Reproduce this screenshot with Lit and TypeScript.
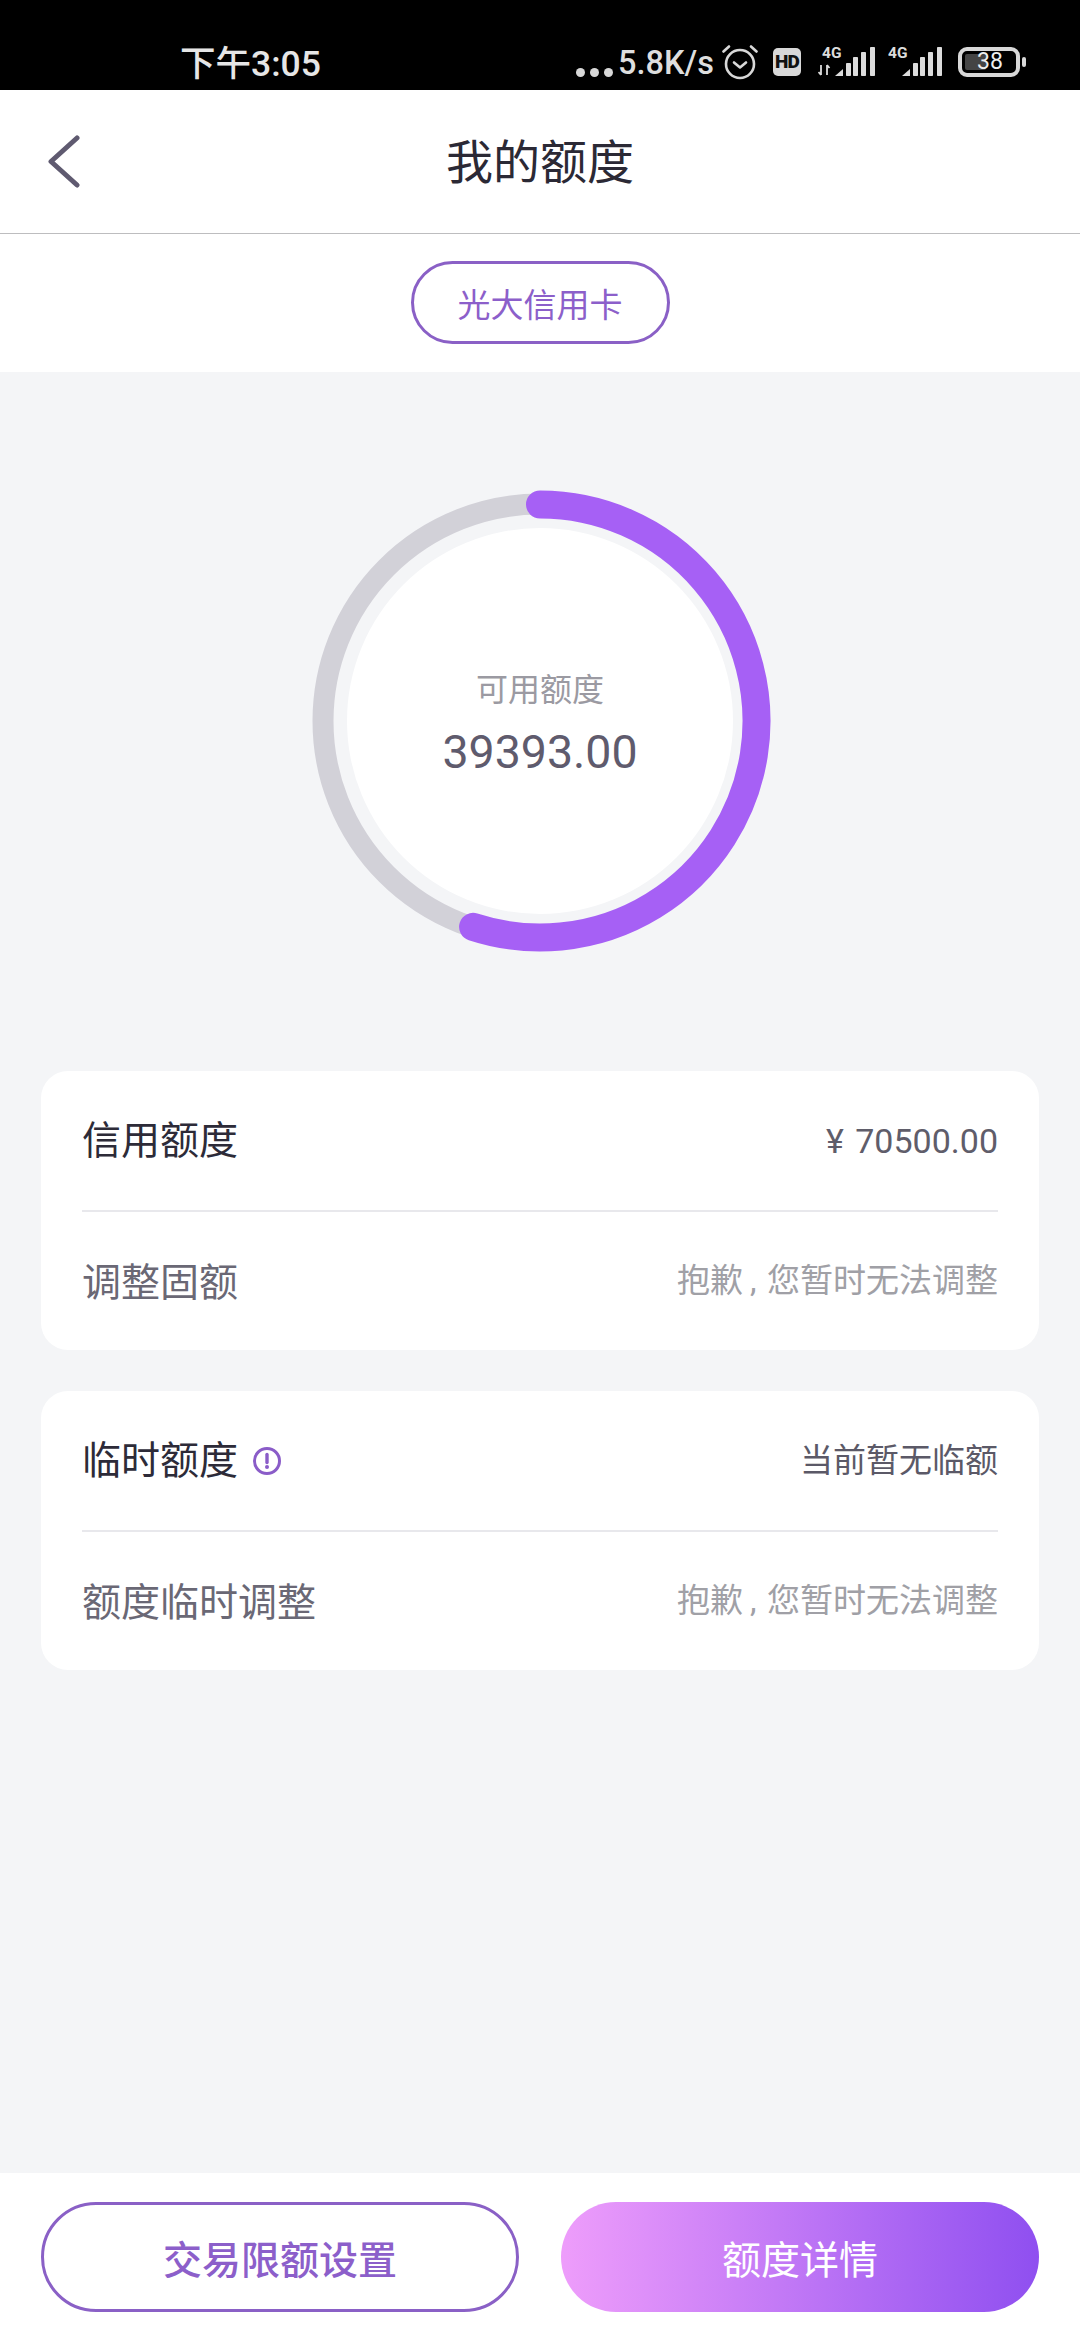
import { LitElement, html, css, svg } from "lit";
import { customElement } from "lit/decorators.js";

const signal = (x: number) => svg`
  <polygon points="${x},30 ${x + 8},23 ${x + 8},30" fill="#dcdcdc"/>
  <rect x="${x + 11}" y="17" width="5" height="13" rx="0.8" fill="#dcdcdc"/>
  <rect x="${x + 18}" y="11" width="5" height="19" rx="0.8" fill="#dcdcdc"/>
  <rect x="${x + 26}" y="6" width="5" height="24" rx="0.8" fill="#dcdcdc"/>
  <rect x="${x + 35}" y="1" width="5" height="29" rx="0.8" fill="#dcdcdc"/>`;

@customElement("app-root")
export class AppRoot extends LitElement {
  static styles = css`
    :host { display: block; width: 1080px; height: 2340px; font-family: Roboto, "Noto Sans CJK SC", sans-serif; }
    * { box-sizing: border-box; }
    .page { width: 1080px; height: 2340px; display: flex; flex-direction: column; background: #f4f5f7; }

    .status { height: 90px; background: #000; color: #e6e6e6; display: flex; align-items: flex-start; padding: 45px 0 0 180px; flex: none; position: relative; }
    .time { font-size: 35.5px; line-height: 38px; font-weight: 500; width: 396px; white-space: nowrap; }
    .dots { display: flex; gap: 5px; margin: 23px 5px 0 0; }
    .dots i { width: 9px; height: 9px; border-radius: 50%; background: #d8d8d8; display: block; }
    .speed { font-size: 32.5px; line-height: 36px; font-weight: 500; width: 104px; white-space: nowrap; color: #dedede; }
    .alarm { width: 36px; height: 36px; margin-top: -1px; flex: none; display: block; }
    .hd { width: 28px; height: 28px; margin: 3px 0 0 15px; border-radius: 5px; background: #d8d8d8; color: #111; font-size: 19px; font-weight: 900; line-height: 28px; text-align: center; flex: none; letter-spacing: -0.8px; }
    .sig { display: block; flex: none; margin-top: -5px; }
    .sig text { font-family: Roboto, sans-serif; font-weight: 700; font-size: 15.5px; fill: #dcdcdc; }
    .sig1 { margin-left: 17px; width: 58px; height: 36px; }
    .sig2 { margin-left: 12px; width: 56px; height: 36px; }
    .battery { width: 62px; height: 30px; margin: 2px 0 0 14px; border: 4px solid #d8d8d8; border-radius: 9px; position: relative; flex: none; color: #eee; font-size: 23px; line-height: 22px; text-align: center; padding-left: 2px; }
    .battery span { position: relative; }
    .battery::before { content: ""; position: absolute; left: 3px; top: 3px; bottom: 3px; width: 21px; background: #444; border-radius: 2px; }
    .nub { width: 4px; height: 10px; margin: 12px 0 0 2px; background: #d8d8d8; border-radius: 2px; flex: none; }

    .head { height: 144px; background: #fff; border-bottom: 1px solid #bdbdbf; display: grid; grid-template-columns: 1fr auto 1fr; align-items: center; flex: none; padding-top: 2px; }
    .back { width: 34px; height: 54px; margin: -3px 0 0 47px; display: block; }
    .title { font-size: 47px; color: #2b2935; line-height: 60px; }

    .tabs { height: 138px; background: #fff; display: flex; justify-content: center; padding-top: 27px; flex: none; }
    .pill { width: 259px; height: 83px; border: 3px solid #8a60c6; border-radius: 42px; color: #8c5fca; font-size: 33px; display: flex; align-items: center; justify-content: center; }

    .main { flex: 1; padding: 0 41px; display: flex; flex-direction: column; align-items: stretch; }
    .ring { display: grid; width: 480px; height: 480px; margin: 109px auto 110px; }
    .ring > * { grid-area: 1 / 1; }
    .ring svg { width: 480px; height: 480px; display: block; }
    .center { display: flex; flex-direction: column; align-items: center; padding-top: 188px; }
    .avail { font-size: 32px; line-height: 42px; color: #9b9aa2; }
    .amount { font-size: 46.5px; line-height: 56px; margin-top: 13px; color: #5f5b6d; }

    .card { background: #fff; border-radius: 27px; padding: 0 41px; margin-bottom: 41px; }
    .row { height: 139px; display: flex; align-items: center; justify-content: space-between; }
    .row + .row { border-top: 2px solid #e8e8ec; height: 140px; }
    .row + .row .label { padding-top: 3px; }
    .label { font-size: 39px; line-height: 50px; display: flex; align-items: center; }
    .dark { color: #2d2b38; }
    .muted { color: #6a6875; }
    .val { font-size: 33px; line-height: 44px; }
    .val-dark { color: #5b5967; }
    .val-num { font-size: 34px; color: #5f5d6a; word-spacing: 3px; }
    .val-muted { color: #a0a0a6; }
    .comma { display: inline-block; width: 24px; padding-left: 7px; }
    .info { width: 30px; height: 30px; margin-left: 14px; display: block; }

    .foot { height: 167px; background: #fff; padding: 29px 41px 0; display: flex; justify-content: space-between; flex: none; }
    .btn { width: 478px; height: 110px; border-radius: 55px; display: flex; align-items: center; justify-content: center; font-size: 39px; font-weight: 500; }
    .outline { border: 3px solid #8a60c6; color: #8c5fca; }
    .fill { color: #fff; background: linear-gradient(90deg, #ee9dfb 0%, #8f4ff0 100%); font-weight: 400; }
  `;

  private arc() {
    const r = 216.5, c = 240, deg = 198;
    const a = (deg * Math.PI) / 180;
    const x = c + r * Math.sin(a), y = c - r * Math.cos(a);
    return `M ${c} ${c - r} A ${r} ${r} 0 1 1 ${x.toFixed(1)} ${y.toFixed(1)}`;
  }

  private sorry() {
    return html`抱歉<span class="comma">,</span>您暂时无法调整`;
  }

  render() {
    return html`<div class="page">
      <div class="status">
        <div class="time">下午3:05</div>
        <div class="dots"><i></i><i></i><i></i></div>
        <div class="speed">5.8K/s</div>
        <svg class="alarm" viewBox="0 0 36 36" fill="none" stroke="#d8d8d8" stroke-width="2.6" stroke-linecap="round" stroke-linejoin="round">
          <circle cx="18" cy="20" r="14"/>
          <path d="M12 18.5l6 5 6-5"/>
          <path d="M1.5 7.5L7 2.5M34.5 7.5L29 2.5"/>
        </svg>
        <div class="hd">HD</div>
        <svg class="sig sig1" viewBox="0 -6 58 36">
          <text x="4" y="12">4G</text>
          <path d="M3 19v10M3 29l-2.5-3M9 29V19M9 19l2.5 3" stroke="#dcdcdc" stroke-width="1.8" fill="none"/>
          ${signal(17)}
        </svg>
        <svg class="sig sig2" viewBox="0 -6 56 36">
          <text x="0" y="12">4G</text>
          ${signal(14)}
        </svg>
        <div class="battery"><span>38</span></div>
        <div class="nub"></div>
      </div>

      <div class="head">
        <svg class="back" viewBox="0 0 34 54" fill="none" stroke="#5f5a70" stroke-width="5" stroke-linecap="round" stroke-linejoin="round">
          <path d="M30 4L4 27.5 30 51"/>
        </svg>
        <div class="title">我的额度</div>
        <div></div>
      </div>

      <div class="tabs"><div class="pill">光大信用卡</div></div>

      <div class="main">
        <div class="ring">
          <svg viewBox="0 0 480 480">
            <circle cx="240" cy="240" r="193" fill="#fff"/>
            <circle cx="240" cy="240" r="217" fill="none" stroke="#d2d1d8" stroke-width="21"/>
            <path d="${this.arc()}" fill="none" stroke="#a660f5" stroke-width="28" stroke-linecap="round"/>
          </svg>
          <div class="center">
            <div class="avail">可用额度</div>
            <div class="amount">39393.00</div>
          </div>
        </div>

        <div class="card">
          <div class="row">
            <div class="label dark">信用额度</div>
            <div class="val val-num">¥ 70500.00</div>
          </div>
          <div class="row">
            <div class="label muted">调整固额</div>
            <div class="val val-muted">${this.sorry()}</div>
          </div>
        </div>

        <div class="card">
          <div class="row">
            <div class="label dark">临时额度
              <svg class="info" viewBox="0 0 30 30" fill="none">
                <circle cx="15" cy="15" r="12.5" stroke="#8a5cc8" stroke-width="3"/>
                <path d="M15 8.5v8" stroke="#8a5cc8" stroke-width="3.4" stroke-linecap="round"/>
                <circle cx="15" cy="21" r="2" fill="#8a5cc8"/>
              </svg>
            </div>
            <div class="val val-dark">当前暂无临额</div>
          </div>
          <div class="row">
            <div class="label muted">额度临时调整</div>
            <div class="val val-muted">${this.sorry()}</div>
          </div>
        </div>
      </div>

      <div class="foot">
        <div class="btn outline">交易限额设置</div>
        <div class="btn fill">额度详情</div>
      </div>
    </div>`;
  }
}
